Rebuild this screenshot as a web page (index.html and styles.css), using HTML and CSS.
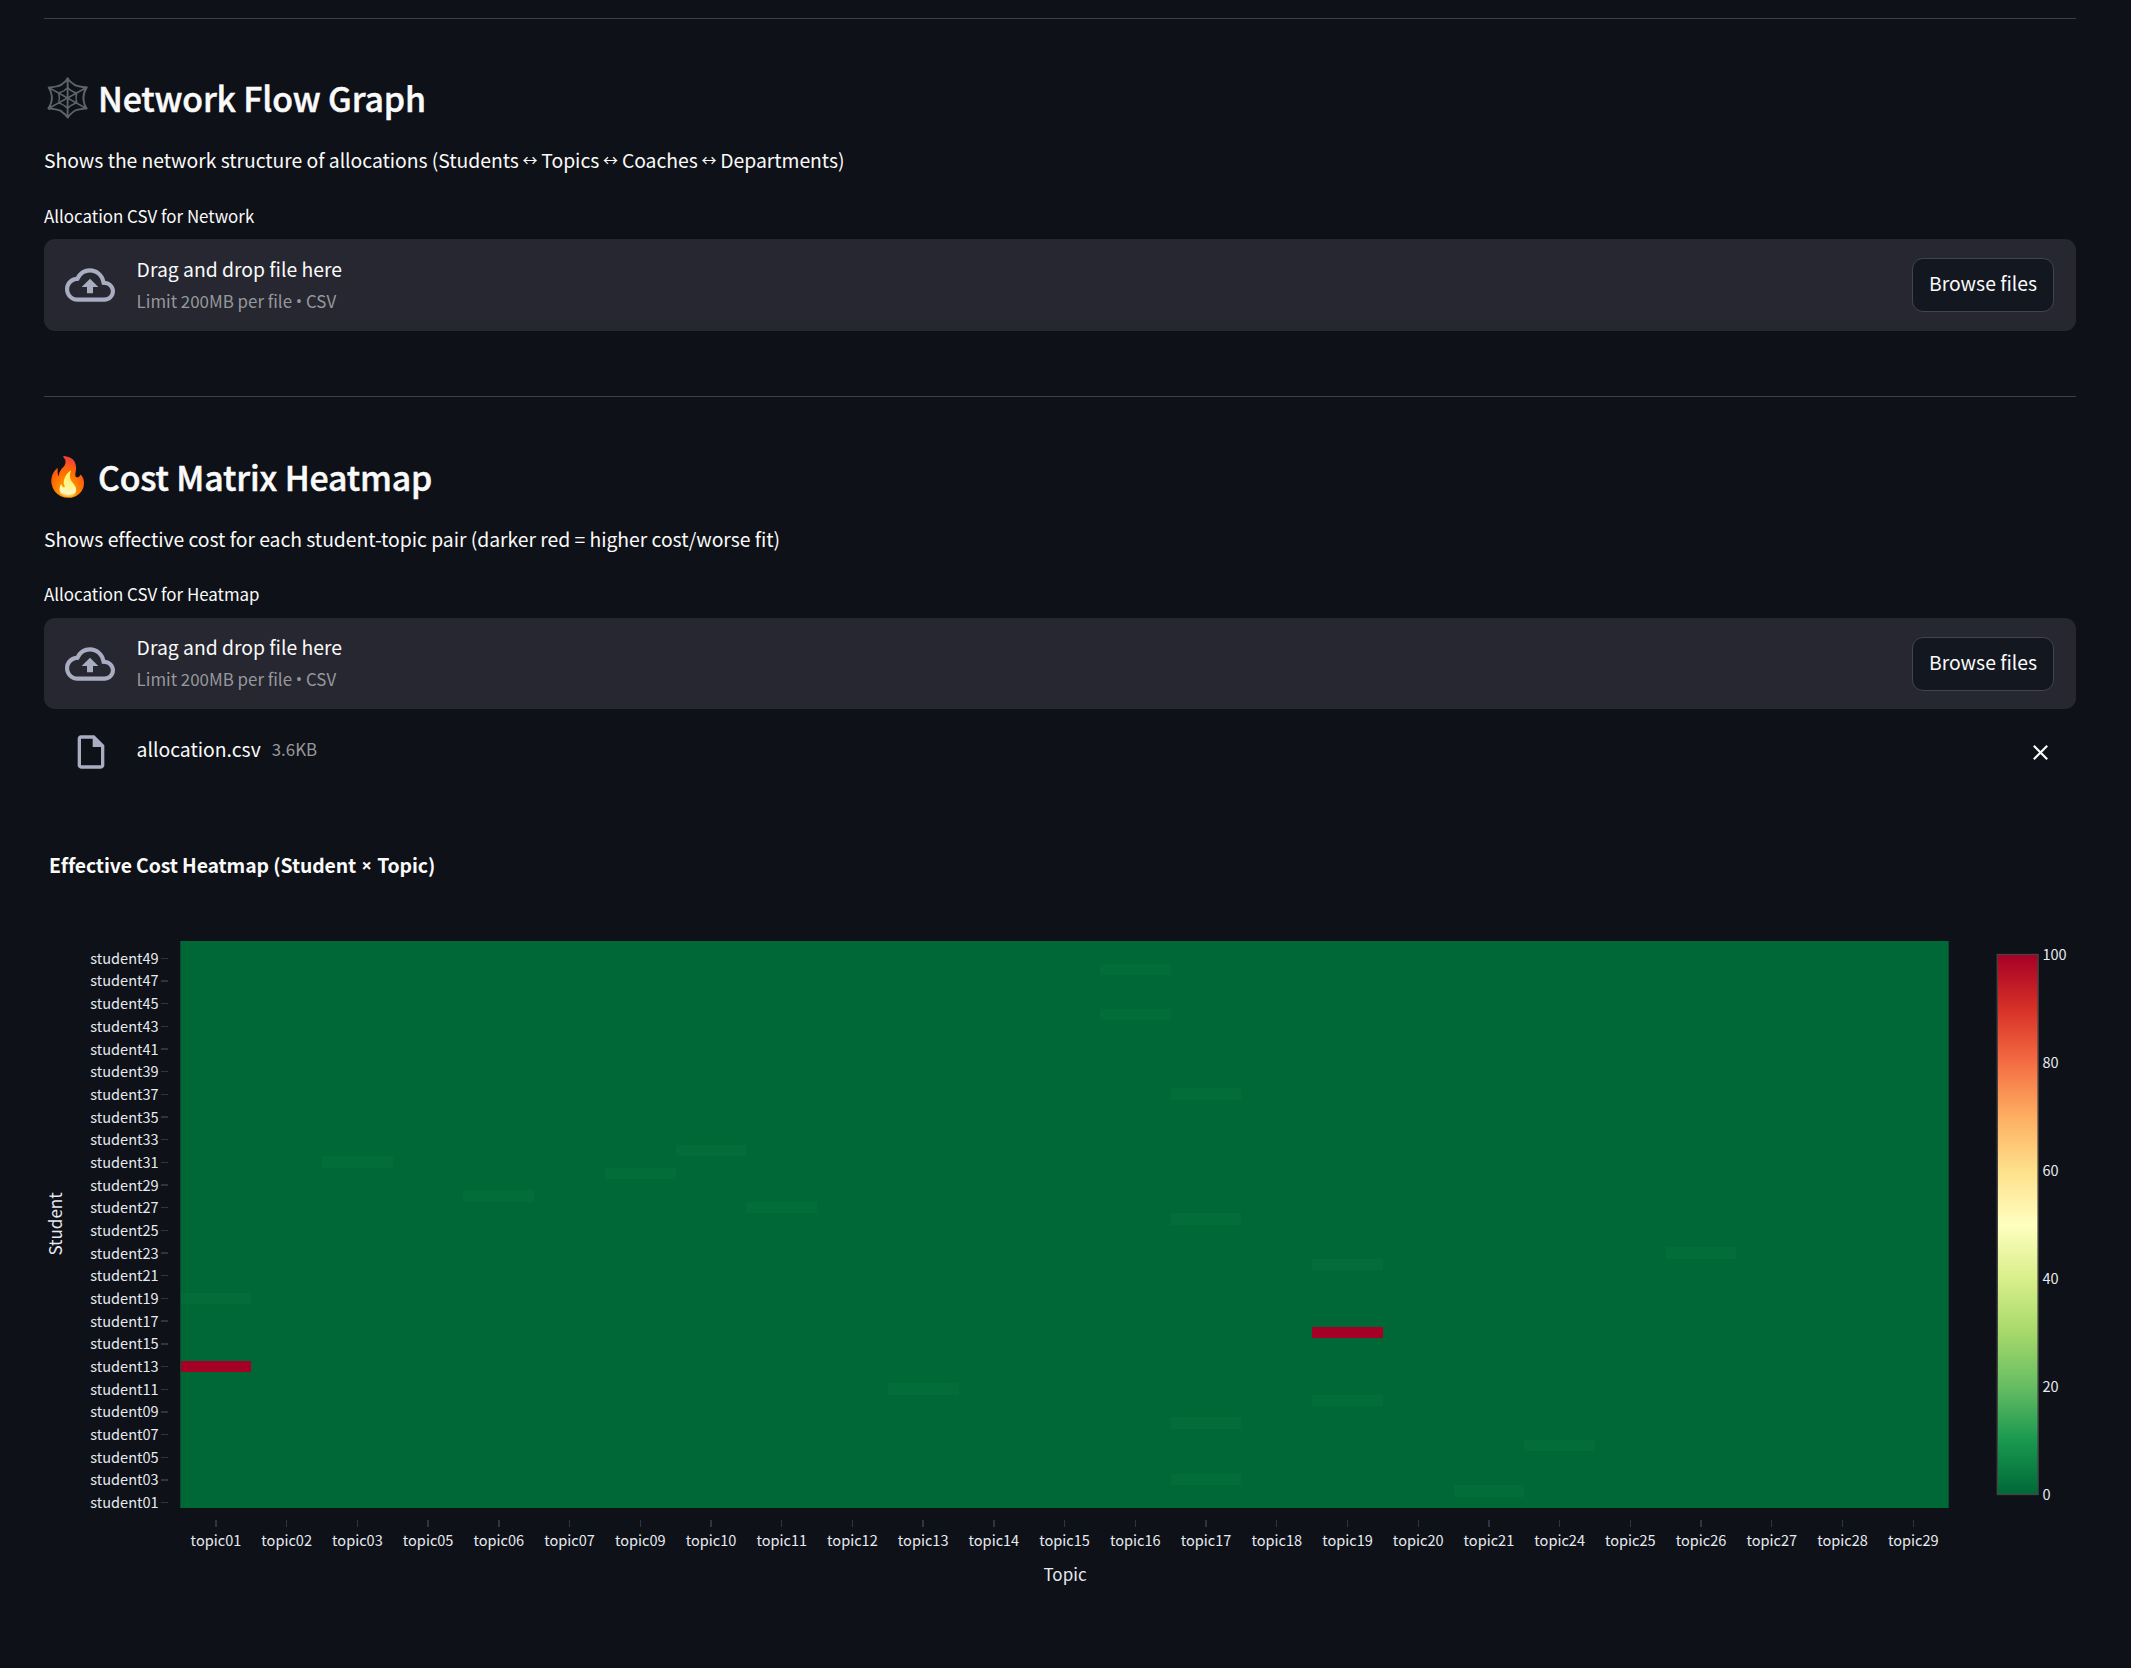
FILE: index.html
```
<!DOCTYPE html>
<html lang="en">
<head>
<meta charset="utf-8">
<title>Allocation Dashboard</title>
<link rel="stylesheet" href="styles.css">
</head>
<body>
<svg class="symbols" aria-hidden="true">
  <symbol id="cloud-upload" viewBox="0 0 24 24"><path d="M19.35 10.04A7.49 7.49 0 0 0 12 4C9.11 4 6.6 5.64 5.35 8.04A5.994 5.994 0 0 0 0 14c0 3.31 2.69 6 6 6h13c2.76 0 5-2.24 5-5 0-2.64-2.05-4.78-4.65-4.96zM19 18H6c-2.21 0-4-1.79-4-4 0-2.05 1.53-3.76 3.56-3.97l1.07-.11.5-.95A5.469 5.469 0 0 1 12 6c2.62 0 4.88 1.86 5.39 4.43l.3 1.5 1.53.11A2.98 2.98 0 0 1 22 15c0 1.65-1.35 3-3 3zM8 13h2.55v3h2.9v-3H16l-4-4z"/></symbol>
  <symbol id="file" viewBox="0 0 24 24"><path d="M14 2H6c-1.1 0-1.99.9-1.99 2L4 20c0 1.1.89 2 1.99 2H18c1.1 0 2-.9 2-2V8l-6-6zM6 20V4h7v5h5v11H6z"/></symbol>
</svg>
<main class="page">
  <section class="section section-network">
    <h2 class="heading"><span class="emoji">🕸️</span>Network Flow Graph</h2>
    <p class="description">Shows the network structure of allocations (Students<span class="arrow">↔</span>Topics<span class="arrow">↔</span>Coaches<span class="arrow">↔</span>Departments)</p>
    <p class="label">Allocation CSV for Network</p>
    <div class="uploader">
      <svg class="cloud"><use href="#cloud-upload"/></svg>
      <div class="instructions">
        <span class="prompt">Drag and drop file here</span>
        <span class="limit">Limit 200MB per file<span class="bullet">•</span>CSV</span>
      </div>
      <button class="browse">Browse files</button>
    </div>
  </section>
  <section class="section section-heatmap">
    <h2 class="heading"><span class="emoji">🔥</span>Cost Matrix Heatmap</h2>
    <p class="description">Shows effective cost for each student-topic pair (darker red = higher cost/worse fit)</p>
    <p class="label">Allocation CSV for Heatmap</p>
    <div class="uploader">
      <svg class="cloud"><use href="#cloud-upload"/></svg>
      <div class="instructions">
        <span class="prompt">Drag and drop file here</span>
        <span class="limit">Limit 200MB per file<span class="bullet">•</span>CSV</span>
      </div>
      <button class="browse">Browse files</button>
    </div>
    <div class="uploaded">
      <svg class="file-icon"><use href="#file"/></svg>
      <span class="file-name">allocation.csv</span>
      <span class="file-size">3.6KB</span>
      <svg class="remove" viewBox="0 0 15 15"><path d="M.8.8l13.4 13.4M14.2.8L.8 14.2"/></svg>
    </div>
  </section>
  <h3 class="chart-title">Effective Cost Heatmap (Student<span class="times">×</span>Topic)</h3>
  <svg class="chart" id="chart" viewBox="0 920 2131 700">
    <defs>
      <linearGradient id="scale" x1="0" y1="1" x2="0" y2="0">
        <stop offset="0" stop-color="#006837"/><stop offset=".1" stop-color="#1a9850"/><stop offset=".2" stop-color="#66bd63"/><stop offset=".3" stop-color="#a6d96a"/><stop offset=".4" stop-color="#d9ef8b"/><stop offset=".5" stop-color="#ffffbf"/><stop offset=".6" stop-color="#fee08b"/><stop offset=".7" stop-color="#fdae61"/><stop offset=".8" stop-color="#f46d43"/><stop offset=".9" stop-color="#d73027"/><stop offset="1" stop-color="#a50026"/>
      </linearGradient>
    </defs>
  </svg>
</main>
<script src="chart.js"></script>
</body>
</html>
```
FILE: styles.css
```
* { box-sizing: border-box; }
body {
  margin: 0;
  background: #0e1117;
  color: #fafafa;
  font-family: "Noto Sans CJK SC", "Noto Sans", sans-serif;
  font-size: 19.35px;
}
h2, h3, p { margin: 0; font-weight: 400; }
.symbols { display: none; }
.page { height: 1668px; padding-top: 18px; overflow: hidden; }
.section { margin: 0 55px 0 44px; border-top: 1px solid #3d4045; }
.section-network { height: 378px; padding-top: 56px; }
.section-heatmap { height: 440px; padding-top: 57px; }
.heading {
  display: flex;
  height: 46px;
  margin-bottom: 23.5px;
  font-size: 33.8px;
  font-weight: 500;
  line-height: 46px;
  letter-spacing: -.13px;
  white-space: nowrap;
  -webkit-text-stroke: .5px #fafafa;
}
.emoji {
  width: 54px;
  font-family: "Noto Color Emoji", sans-serif;
  font-size: 38px;
  -webkit-text-stroke: 0;
}
.description { height: 30px; margin-bottom: 29px; line-height: 30px; letter-spacing: -.03px; white-space: nowrap; }
.section-heatmap .description { margin-bottom: 28.5px; }
.arrow { display: inline-block; width: 22.6px; height: 30px; font-size: 15px; text-align: center; vertical-align: top; }
.label { height: 24px; margin-bottom: 11.5px; font-size: 16.9px; line-height: 24px; }
.section-heatmap .label { margin-bottom: 12px; }
.uploader {
  display: flex;
  align-items: center;
  height: 92px;
  padding: 0 22px 0 21px;
  border-radius: 11px;
  background: #262730;
}
.section-heatmap .uploader { height: 91px; }
.cloud { width: 50px; height: 50px; fill: #a9adc1; }
.instructions { display: flex; flex-direction: column; gap: 7px; margin: 0 auto 2px 21.6px; }
.prompt { line-height: 26px; }
.limit { color: #97989d; font-size: 16.9px; line-height: 24px; }
.bullet { display: inline-block; width: 14px; height: 24px; font-family: "Open Sans", sans-serif; text-align: center; vertical-align: top; }
.browse {
  width: 142px;
  height: 54px;
  padding: 0 0 4px;
  border: 1px solid #41444c;
  border-radius: 11px;
  background: #131720;
  color: inherit;
  font: inherit;
}
.uploaded { display: flex; align-items: center; height: 86px; padding: 0 28px 0 26.6px; }
.file-icon { width: 40px; height: 40px; fill: #a9adc1; }
.file-name { margin: 0 11px 7px 26px; line-height: 28px; }
.file-size { margin: 0 auto 6px 0; color: #97989d; font-size: 16.9px; line-height: 24px; }
.remove { width: 15px; height: 15px; fill: none; stroke: #fafafa; stroke-width: 2.2; }
.chart-title { height: 84px; padding: 14px 0 0 49px; font-size: 19.4px; font-weight: 700; line-height: 30px; letter-spacing: -.1px; }
.times { display: inline-block; width: 21px; height: 30px; font-family: "Open Sans", sans-serif; font-size: 18px; text-align: center; vertical-align: top; }
.chart { display: block; width: 2131px; height: 700px; }
.tick-label { fill: #e6eaf1; font-size: 14.55px; }
.axis-title { fill: #e6eaf1; font-size: 17px; text-anchor: middle; }
.tick { fill: #31333f; shape-rendering: crispEdges; }
.cost-none { fill: #006837; }
.cost-low { fill: #036d39; }
.cost-high { fill: #a50026; }
.edge { fill: #0b4a30; }
.color-bar { fill: url(#scale); stroke: #444; stroke-width: 1.36; }
```
FILE: chart.js
```
const chart = document.getElementById('chart');
const topics = ['01','02','03','05','06','07','09','10','11','12','13','14','15','16','17','18','19','20','21','24','25','26','27','28','29'];
const lowCosts = [['16',48],['16',44],['17',37],['10',32],['03',31],['09',30],['06',28],['11',27],['17',26],['26',23],['19',22],['01',19],['13',11],['19',10],['17',8],['24',6],['17',3],['21',2]];
const highCosts = [['19',16],['01',13]];
const plot = { left: 180.6, top: 941, bottom: 1508, column: 70.72, row: 11.34 };

function add(name, attributes, text) {
  const node = document.createElementNS('http://www.w3.org/2000/svg', name);
  for (const key in attributes) node.setAttribute(key, attributes[key]);
  if (text !== undefined) node.textContent = text;
  chart.append(node);
}
function rect(kind, x, y, width, height) {
  add('rect', { class: kind, x, y, width, height });
}
function cell(kind, topic, student) {
  const column = topics.indexOf(topic);
  const x = Math.round(plot.left + column * plot.column);
  const right = Math.round(plot.left + (column + 1) * plot.column);
  const y = Math.round(plot.bottom - student * plot.row);
  const bottom = Math.round(plot.bottom - (student - 1) * plot.row);
  rect(kind, x, y, right - x, bottom - y);
}

rect('cost-none', 181, plot.top, 1767, 567);
lowCosts.forEach(([topic, student]) => cell('cost-low', topic, student));
highCosts.forEach(([topic, student]) => cell('cost-high', topic, student));
rect('edge', 180, plot.top, 1, 567);
rect('edge', 1948, plot.top, 1, 567);

for (let student = 49; student > 0; student -= 2) {
  const y = plot.bottom - (student - 0.5) * plot.row;
  rect('tick', 161, y - 0.4, 7, 1.36);
  add('text', { class: 'tick-label', x: 158.7, y: y + 5.8, 'text-anchor': 'end' }, 'student' + String(student).padStart(2, '0'));
}
topics.forEach((topic, index) => {
  const x = plot.left + (index + 0.5) * plot.column;
  rect('tick', x - 0.68, 1520, 1.36, 7);
  add('text', { class: 'tick-label', x, y: 1546.3, 'text-anchor': 'middle' }, 'topic' + topic);
});
add('text', { class: 'axis-title', x: 1065, y: 1580.5 }, 'Topic');
add('text', { class: 'axis-title', transform: 'translate(62.3 1224) rotate(-90)' }, 'Student');

add('rect', { class: 'color-bar', x: 1997.3, y: 954.5, width: 40.8, height: 540 });
for (let value = 0; value <= 100; value += 20) {
  add('text', { class: 'tick-label', x: 2042.4, y: 1500 - value * 5.4 }, value);
}
```
